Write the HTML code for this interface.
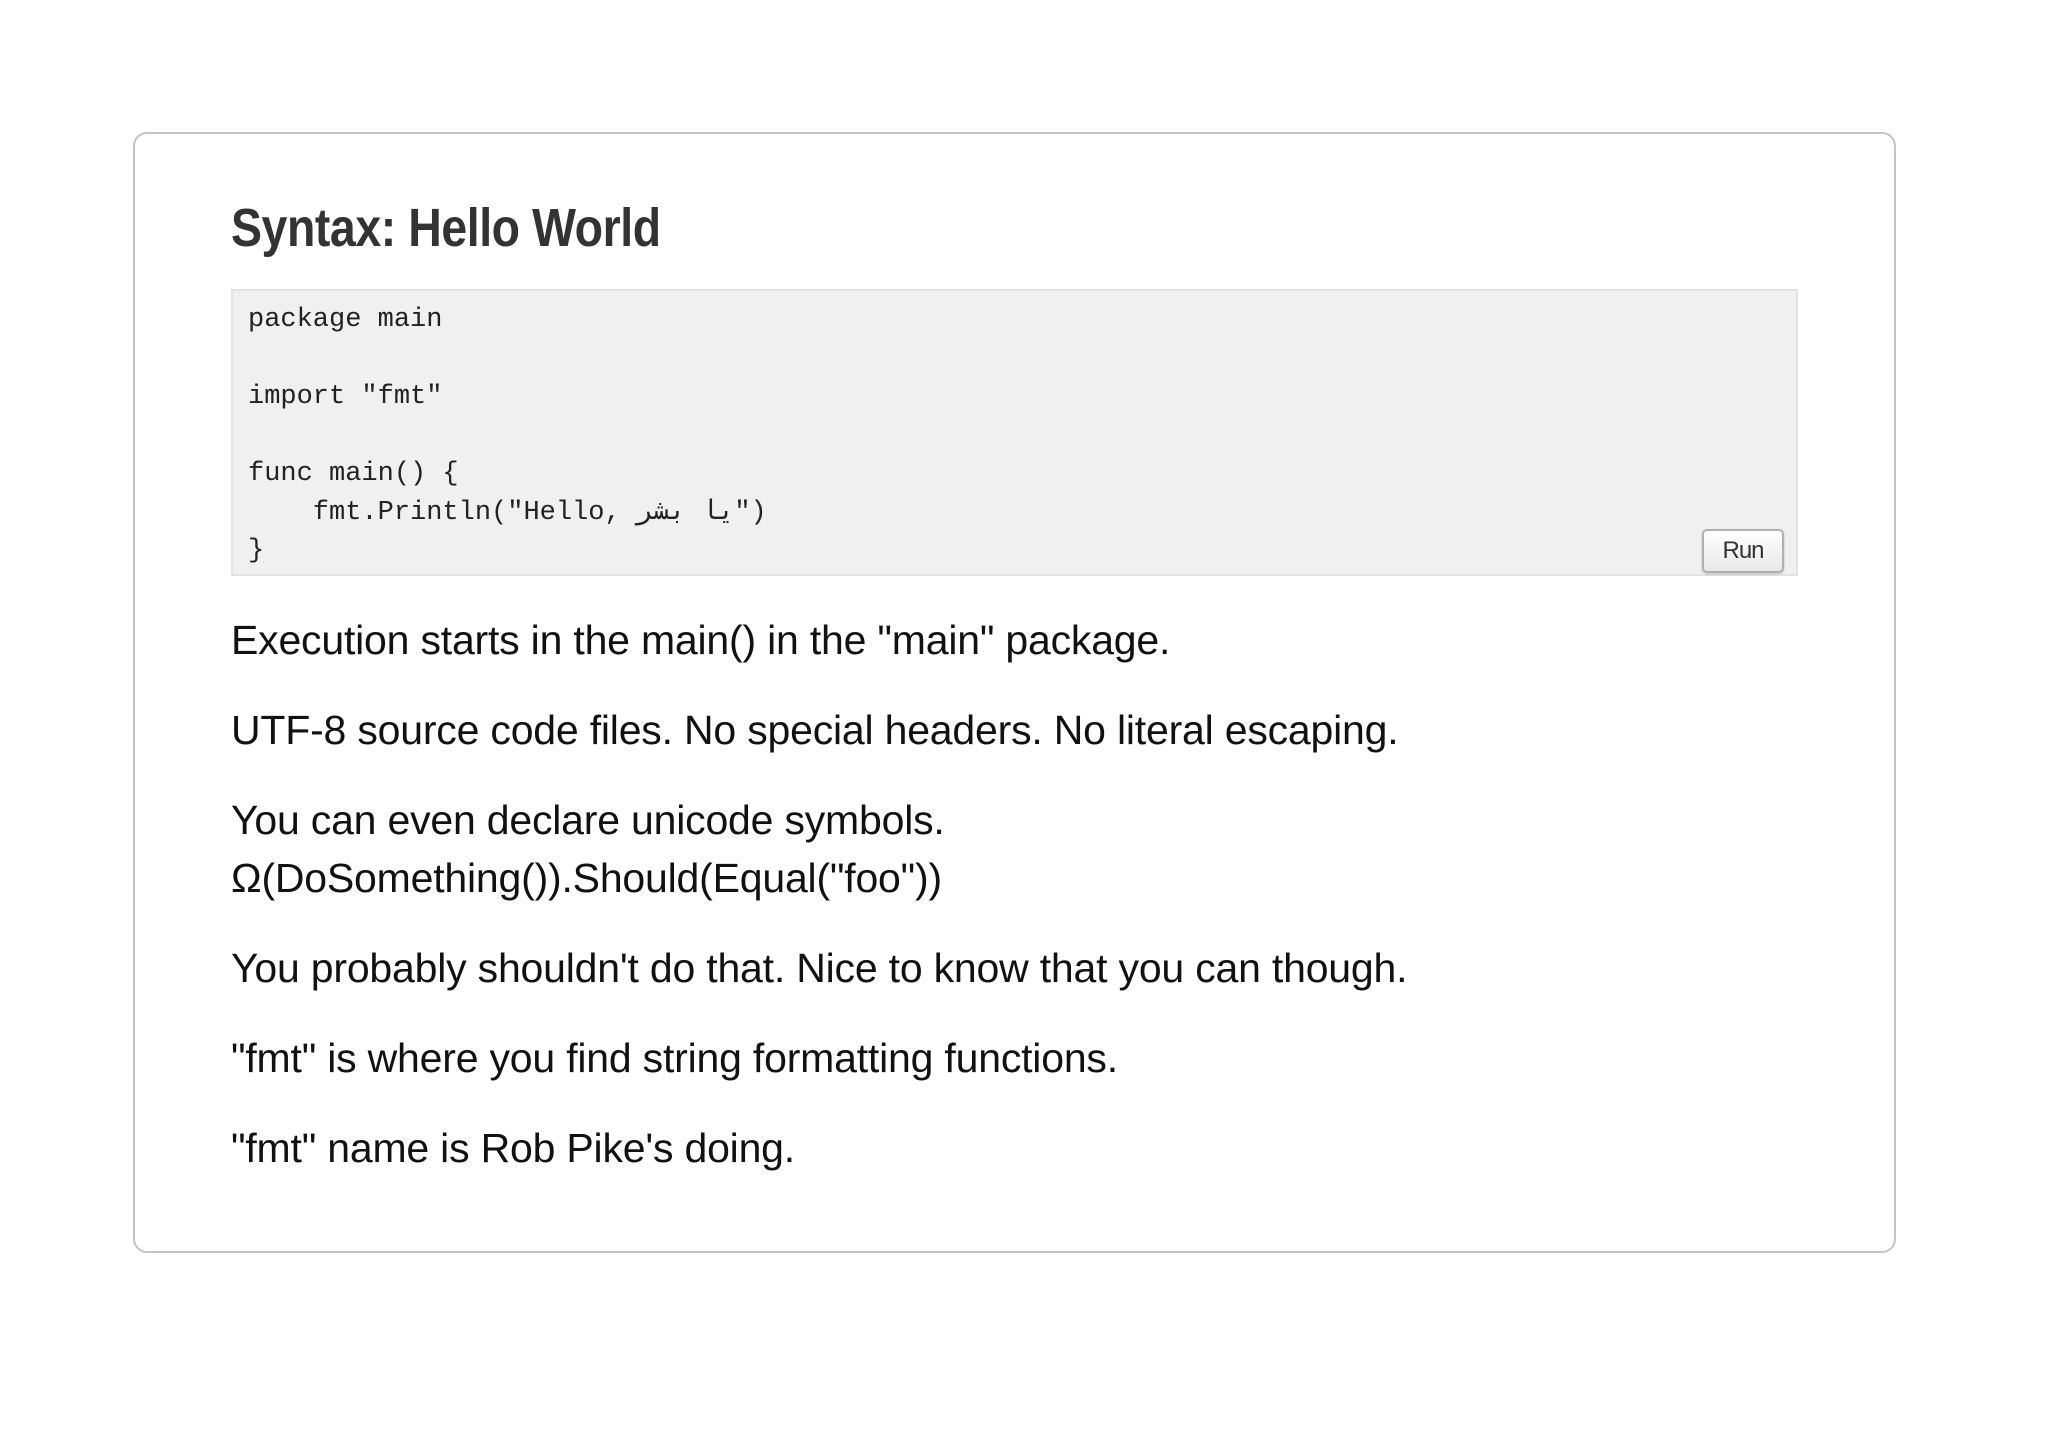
<!DOCTYPE html>
<html><head><meta charset="utf-8"><style>
html,body{margin:0;padding:0;background:#fff;width:2048px;height:1448px;overflow:hidden}
.card{position:absolute;left:133px;top:132px;width:1759px;height:1117px;border:2px solid #c4c4c4;border-radius:14px;box-sizing:content-box}
h1{position:absolute;left:231px;top:196px;margin:0;font:bold 54px/64px "Liberation Sans",sans-serif;color:#333;transform:scaleX(0.86);transform-origin:0 0;white-space:nowrap;letter-spacing:-0.5px}
.code{position:absolute;left:231px;top:289px;width:1563px;height:283px;background:#f0f0f0;border:2px solid #e2e2e2}
pre{margin:0;position:absolute;left:15px;top:10px;font:27px/38.5px "Liberation Mono","DejaVu Sans Mono",monospace;color:#222}
.run{position:absolute;left:1469px;top:238px;width:78px;height:40px;border:2px solid #b0b0b0;border-radius:5px;background:linear-gradient(#fff,#e8e8e8);font:24px/40px "Liberation Sans",sans-serif;color:#333;text-align:center;letter-spacing:-1px;box-shadow:0 1px 2px rgba(0,0,0,.2)}
.txt{position:absolute;left:231px;top:612px;font:41px/57.8px "Liberation Sans",sans-serif;color:#111;letter-spacing:-0.2px}
.txt p{margin:0 0 32.2px;white-space:nowrap}
</style></head><body>
<div class="card"></div>
<h1>Syntax: Hello World</h1>
<div class="code"><pre>package main

import "fmt"

func main() {
    fmt.Println("Hello, يا بشر")
}</pre><div class="run">Run</div></div>
<div class="txt">
<p>Execution starts in the main() in the "main" package.</p>
<p>UTF-8 source code files. No special headers. No literal escaping.</p>
<p>You can even declare unicode symbols.<br>Ω(DoSomething()).Should(Equal("foo"))</p>
<p>You probably shouldn't do that. Nice to know that you can though.</p>
<p>"fmt" is where you find string formatting functions.</p>
<p>"fmt" name is Rob Pike's doing.</p>
</div>
</body></html>
